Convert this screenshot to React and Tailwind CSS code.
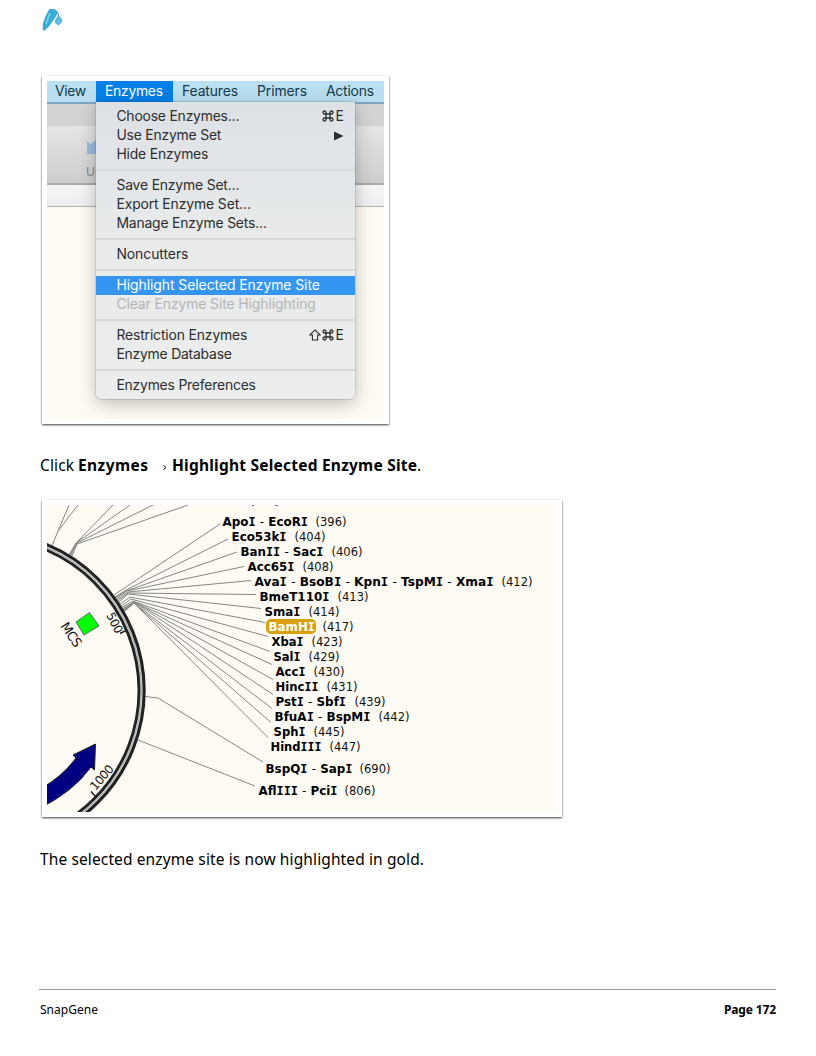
function Separator() {
  return (
    <div className="flex h-3 shrink-0 items-center">
      <div className="h-[2px] w-full bg-[#d6d9da]" />
    </div>
  );
}

function Command() {
  return (
    <svg className="-mt-px" width="12" height="12" viewBox="0 0 24 24" fill="none" stroke="currentColor" strokeWidth="2.6">
      <path d="M8 8h8v8H8zM8 8H5a3 3 0 1 1 3-3zM16 8h3a3 3 0 1 0-3-3zM8 16H5a3 3 0 1 0 3 3zM16 16h3a3 3 0 1 1-3 3z" />
    </svg>
  );
}

function Shift() {
  return (
    <svg className="-mt-px" width="12" height="12" viewBox="0 0 12 12" fill="none" stroke="currentColor" strokeWidth="1.1">
      <path d="M6 .9 11.2 6H8.6v5H3.4V6H.8z" />
    </svg>
  );
}

function Item({ label, width, tone = "text-[#2b2d2f]", children }) {
  return (
    <div className={`flex h-[19px] shrink-0 items-center justify-between pl-[20px] pr-[10px] ${tone}`}>
      <svg className="h-[19px] w-[212px]">
        <text x="0.4" y="14" fontSize="13.9" fill="currentColor" textLength={width}>{label}</text>
      </svg>
      <span className="flex items-center gap-px">{children}</span>
    </div>
  );
}

function KeyE() {
  return (
    <svg width="10" height="19">
      <text x="0.5" y="14" fontSize="13.9" fill="currentColor">E</text>
    </svg>
  );
}

function BarItem({ label, width, box }) {
  return (
    <div className={`h-[21px] shrink-0 ${box}`}>
      <svg className="h-[21px] w-full">
        <text x="9" y="15.4" fontSize="13.9" fill="currentColor" textLength={width}>{label}</text>
      </svg>
    </div>
  );
}

function MenuShot() {
  return (
    <div className="relative h-[338px] w-[337px] overflow-hidden bg-[#fefbf4] font-['Inter',sans-serif] [font-weight:430]">
      <div className="flex h-[21px] bg-[#b9dff1] text-[#15384c]">
        <BarItem label="View" width={31} box="w-[49px] [&_text]:translate-x-[-1px]" />
        <BarItem label="Enzymes" width={58} box="w-[77px] bg-[#0480e8] text-white" />
        <BarItem label="Features" width={56} box="w-[75px]" />
        <BarItem label="Primers" width={50} box="w-[69px]" />
        <BarItem label="Actions" width={48} box="w-[67px]" />
      </div>
      <div className="h-[2px] bg-[#7ea6c2]" />
      <div className="h-[22px] bg-[#d3d3d3]" />
      <div className="flex h-[57px] items-start bg-linear-to-b from-[#e5e5e5] to-[#cecece] pl-10">
        <div className="flex flex-col">
          <svg width="24" height="28" viewBox="0 0 24 28">
            <path d="M0 15 4 18 10 13 20 18V28H0z" fill="#9abce0" />
          </svg>
          <svg width="24" height="24">
            <text x="-1" y="22" fontSize="12" fill="#858585">Use</text>
          </svg>
        </div>
      </div>
      <div className="h-[2px] bg-[#aaa]" />
      <div className="h-[21px] bg-linear-to-b from-[#f6f6f6] to-[#eee]" />
      <div className="h-px bg-[#b4b4b4]" />
      <div className="absolute left-[49px] top-[21px] flex h-[297px] w-[259px] flex-col rounded-b-[6px] bg-linear-to-b from-[#dde1e6] via-[#e9ebeb] via-50% to-[#eceded] pt-[5px] shadow-[0_0_0_1px_rgba(0,0,0,.1),0_5px_18px_rgba(0,0,0,.25)]">
        <Item label="Choose Enzymes..." width={123}><Command /><KeyE /></Item>
        <Item label="Use Enzyme Set" width={105}>
          <svg width="11" height="10" viewBox="0 0 11 10"><path d="M0 .5 9.5 5 0 9.5z" fill="currentColor" /></svg>
        </Item>
        <Item label="Hide Enzymes" width={92} />
        <Separator />
        <Item label="Save Enzyme Set..." width={123} />
        <Item label="Export Enzyme Set..." width={134.5} />
        <Item label="Manage Enzyme Sets..." width={150.5} />
        <Separator />
        <Item label="Noncutters" width={72} />
        <Separator />
        <Item label="Highlight Selected Enzyme Site" width={203.5} tone="bg-[#3596f1] text-white" />
        <Item label="Clear Enzyme Site Highlighting" width={199.5} tone="text-[#b2b4b5]" />
        <Separator />
        <Item label="Restriction Enzymes" width={131}><Shift /><Command /><KeyE /></Item>
        <Item label="Enzyme Database" width={115.5} />
        <Separator />
        <Item label="Enzymes Preferences" width={139.5} />
      </div>
    </div>
  );
}

// x of the name, baseline, width of the name, name, x of the position, position
const SITES = [
  [222.5, 525.5, 85.5, "ApoI - EcoRI", 315.5, 396],
  [231.5, 540.5, 55, "Eco53kI", 294.5, 404],
  [240.5, 555.5, 83, "BanII - SacI", 331.5, 406],
  [247.5, 570.5, 47, "Acc65I", 302.5, 408],
  [254.5, 585.5, 239, "AvaI - BsoBI - KpnI - TspMI - XmaI", 501.5, 412],
  [259.5, 600.5, 70, "BmeT110I", 337.5, 413],
  [264.5, 615.5, 36, "SmaI", 308.5, 414],
  [268.5, 630.5, 46.5, "BamHI", 322.5, 417],
  [271.5, 645.5, 32, "XbaI", 311.5, 423],
  [273.5, 660.5, 27, "SalI", 308.5, 429],
  [275.5, 675.5, 30, "AccI", 313.5, 430],
  [275.5, 690.5, 43, "HincII", 326.5, 431],
  [275.5, 705.5, 70.5, "PstI - SbfI", 354.5, 439],
  [274.5, 720.5, 96, "BfuAI - BspMI", 378.5, 442],
  [273.5, 735.5, 32, "SphI", 313.5, 445],
  [270.5, 750.5, 51, "HindIII", 329.5, 447],
  [265.5, 772.5, 87, "BspQI - SapI", 359.5, 690],
  [258.5, 794.5, 79, "AflIII - PciI", 344.5, 806],
];

const LEADERS = [
  "M52 546 58 531 69 505",
  "M58 531 78 505",
  "M69 555 76 543 113 505",
  "M70 555 76 543 130 505",
  "M71 555 77 543 153 505",
  "M72 556 77 544 188 505",
  "M114 595 220 524",
  "M115 597 126 590 228 539",
  "M115 598 126 591 237 552",
  "M116 599 127 591 244 566.5",
  "M117 600 128 592 251 580.5",
  "M118 601 128 593 256 594.5",
  "M118 603 128 594 261 608.5",
  "M119 605 130 597 265 622.5",
  "M120 607 131 599 268 636.5",
  "M121 608 133 601 270 651.5",
  "M122 609 134 602 272 664.5",
  "M122 610 134 602 273 679.5",
  "M123 610 134 602 273 694.5",
  "M123 611 134 603 272 708.5",
  "M124 611 134 603 271 722.5",
  "M124 612 134 603 268 737.5",
  "M145 696.5 158 698 263 762",
  "M138 740 255 786",
];

// The numeral I takes a slab-serif form and the dash a lighter weight.
function SiteName({ name }) {
  return name.split(/(I|-)/).filter(Boolean).map((part, i) => {
    if (part === "I") return <tspan key={i} fontFamily="DejaVu Sans Mono">I</tspan>;
    if (part === "-") return <tspan key={i} fontWeight="400">-</tspan>;
    return <tspan key={i}>{part}</tspan>;
  });
}

function PlasmidMap() {
  return (
    <svg className="block bg-[#fefbf4] font-['DejaVu_Sans',sans-serif]" width="510" height="307" viewBox="47 505 510 307">
      <g fill="none" stroke="#858585" strokeWidth="1">
        {LEADERS.map((d) => <path key={d} d={d} />)}
      </g>
      <g fill="none">
        <circle cx="-14" cy="690.6" r="155.8" stroke="#d8d8d5" strokeWidth="4" />
        <circle cx="-14" cy="690.6" r="158.2" stroke="#222" strokeWidth="3.1" />
        <circle cx="-14" cy="690.6" r="155.5" stroke="#999" strokeWidth="0.7" />
        <circle cx="-14" cy="690.6" r="153" stroke="#222" strokeWidth="2.9" />
        <path d="M120 633.5 127 630M91 791.5 96 797" stroke="#222" strokeWidth="1.6" />
      </g>
      <path d="M76 622 89.5 612.5 99 626 84 635z" fill="#0f0" stroke="#666" />
      <path d="M40 789Q62 777 76 758L73 755 95.5 744 94.5 770 91 767Q73 792 40 808z" fill="#000080" stroke="#222" />
      <g fontSize="12" fill="#111">
        <text transform="translate(60 626) rotate(56)" fontSize="13" textLength="27">MCS</text>
        <text transform="translate(106 615) rotate(63)" fontSize="12" textLength="22">500</text>
        <text transform="translate(95.5 791) rotate(-49)" fontSize="12" textLength="29">1000</text>
      </g>
      <rect x="266" y="619" width="50" height="15" rx="5" fill="#d9a009" />
      {SITES.map(([x, y, width, name, px, position]) => (
        <g key={position} fontSize="12">
          <text x={x} y={y} fontWeight="700" fill={position === 417 ? "#fff" : "#000"} textLength={width} lengthAdjust="spacingAndGlyphs">
            <SiteName name={name} />
          </text>
          <text x={px} y={y} fill="#111" textLength="31" lengthAdjust="spacingAndGlyphs">{`(${position})`}</text>
        </g>
      ))}
      <path d="M252 505.5h2M275 505.5h3" stroke="#777" />
    </svg>
  );
}

function Frame({ children, size }) {
  return (
    <div className={`shrink-0 bg-white pl-[5px] pt-[5px] shadow-[0_1px_2px_rgba(0,0,0,.75)] ${size}`}>
      {children}
    </div>
  );
}

export default function App() {
  return (
    <div className="flex h-[1056px] w-[816px] flex-col bg-white px-10 font-['Noto_Sans',sans-serif] text-black">
      <header className="h-[76px] shrink-0 pt-2">
        <svg width="26" height="26" viewBox="0 0 26 26">
          <path d="M9.5 1.5 15 1.5 17.5 4.5 14.5 10 8 19 4 22.5 3 21 3.5 15 6.5 7z" fill="#35add7" stroke="#3399be" strokeWidth=".8" />
          <path d="M10 5 6 16" stroke="#6fcdec" strokeWidth="2" />
          <path d="M16 4.5 18.7 6V9" fill="none" stroke="#3799bd" />
          <path d="M18.5 8 21.5 11V14L18.5 17 15.5 15V12z" fill="#5cc0e2" stroke="#3fa3c6" strokeWidth=".8" />
        </svg>
      </header>
      <Frame size="ml-[2px] h-[348px] w-[347px]"><MenuShot /></Frame>
      <div className="mt-[30px] shrink-0">
        <svg className="block h-6 w-[520px]">
          <text x="0" y="17" fontSize="15.5" textLength="34">Click</text>
          <text x="38" y="17" fontSize="15.5" fontWeight="700" textLength="70">Enzymes</text>
          <path d="M123.5 11.5 126 13.5 123.5 15.5" fill="none" stroke="#000" />
          <text x="132" y="17" fontSize="15.5" fontWeight="700" textLength="245">Highlight Selected Enzyme Site</text>
          <text x="377" y="17" fontSize="15.5">.</text>
        </svg>
      </div>
      <Frame size="ml-[2px] mt-[22px] h-[317px] w-[520px]"><PlasmidMap /></Frame>
      <div className="mt-[31px] shrink-0">
        <svg className="block h-6 w-[520px]">
          <text x="0" y="17" fontSize="15.5" textLength="384">The selected enzyme site is now highlighted in gold.</text>
        </svg>
      </div>
      <footer className="-ml-px mt-auto flex h-[67px] shrink-0 justify-between border-t border-[#999] pl-px pt-[11px]">
        <svg className="h-5 w-[80px]"><text x="0" y="13" fontSize="12" textLength="58">SnapGene</text></svg>
        <svg className="h-5 w-[52px]"><text x="0" y="13" fontSize="12" fontWeight="700" textLength="52">Page 172</text></svg>
      </footer>
    </div>
  );
}
